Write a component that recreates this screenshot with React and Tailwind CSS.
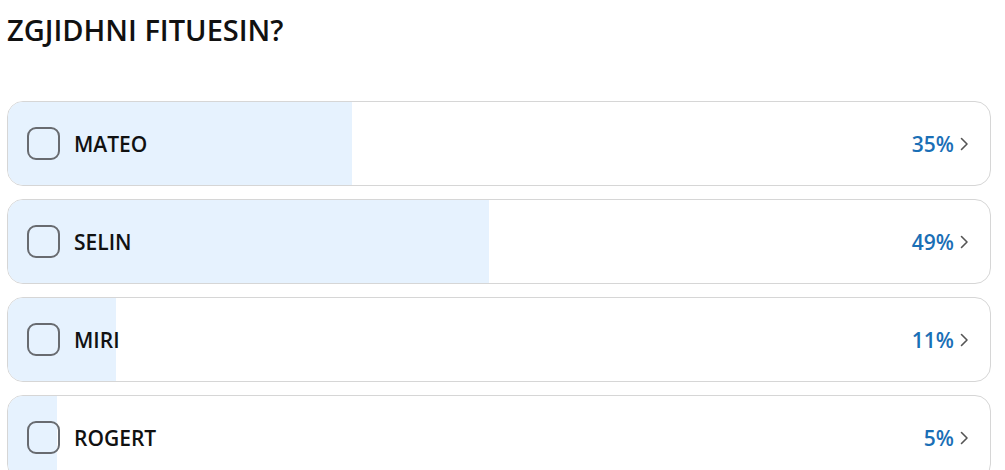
import React from "react";

const items = [
  { name: "MATEO", pct: 35 },
  { name: "SELIN", pct: 49 },
  { name: "MIRI", pct: 11 },
  { name: "ROGERT", pct: 5 },
];

export default function App() {
  return (
    <div className="w-[1005px] h-[470px] overflow-hidden bg-white px-[7px] pt-[10px]" style={{ fontFamily: '"Open Sans", "Noto Sans", sans-serif' }}>
      <h1 className="text-[29px] leading-[40px] font-semibold text-[#111] m-0">ZGJIDHNI FITUESIN?</h1>
      <div className="mt-[51px] flex flex-col gap-[13px] w-[984px]">
        {items.map((it) => (
          <div key={it.name} className="relative h-[85px] rounded-[16px] border border-[#d6d6d6] overflow-hidden bg-white">
            <div className="absolute left-0 top-0 bottom-0 bg-[#e6f2fe]" style={{ width: `${it.pct}%` }} />
            <div className="relative h-full flex items-center pl-[19px] pr-[20px]">
              <div className="w-[33px] h-[33px] rounded-[9px] border-[2.5px] border-[#686b70] bg-transparent" />
              <span className="ml-[14px] mt-[3px] text-[21px] font-semibold text-[#111]">{it.name}</span>
              <span className="ml-auto mt-[3px] text-[21px] font-semibold text-[#1a6fb6]">{it.pct}%</span>
              <svg className="ml-[4px] mt-[1px]" width="12" height="18" viewBox="0 0 12 18" fill="none">
                <path d="M3.5 3.5 L9 9 L3.5 14.5" stroke="#555" strokeWidth="1.6" strokeLinecap="round" strokeLinejoin="round" />
              </svg>
            </div>
          </div>
        ))}
      </div>
    </div>
  );
}
